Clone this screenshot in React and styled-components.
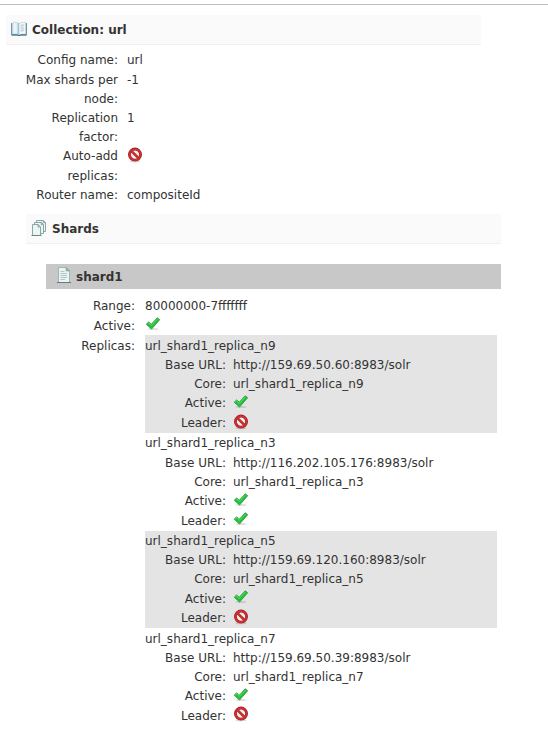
import React from "react";
import styled, { createGlobalStyle } from "styled-components";

const GlobalStyle = createGlobalStyle`
  body {
    margin: 0;
    background: #fff;
    color: #333;
    font-family: "DejaVu Sans", Verdana, sans-serif;
    font-size: 12px;
    line-height: 19.2px;
  }
`;

const Page = styled.main`
  height: 733px;
  padding-top: 4px;
`;

const TopLine = styled.hr`
  height: 1px;
  margin: 0 0 10px;
  border: none;
  background: #c0c0c0;
`;

const Collection = styled.section`
  width: 475px;
  margin-left: 6px;
`;

const Heading = styled.h2`
  display: flex;
  align-items: center;
  gap: 5px;
  box-sizing: border-box;
  height: 30px;
  margin: 0;
  padding: 2px 5px 0;
  border-bottom: 1px solid #f0f0f0;
  background: #fafafa;
  font-size: 12px;
  font-weight: bold;

  svg {
    margin-bottom: 3px;
  }
`;

const Shards = styled.section`
  margin: 9px 0 0 20px;
  width: 475px;
`;

const Shard = styled.section`
  margin: 20px 0 0 20px;
`;

const ShardHeading = styled.h3`
  display: flex;
  align-items: center;
  gap: 4px;
  box-sizing: border-box;
  height: 25px;
  margin: 0;
  padding: 2px 0 0 10px;
  background: #c8c8c8;
  font-size: 12px;
  font-weight: bold;

  svg {
    margin-bottom: 5px;
  }
`;

const List = styled.dl`
  margin: 0;
  padding-top: ${(p) => p.$top || 0}px;
`;

const Row = styled.div`
  display: grid;
  grid-template-columns: ${(p) => p.$label}px 1fr;
  column-gap: ${(p) => p.$gap}px;
  ${(p) => p.$height && `height: ${p.$height}px;`}
`;

const Label = styled.dt`
  padding-top: ${(p) => p.$top || 0}px;
  text-align: right;
`;

const Value = styled.dd`
  margin: 0;

  > svg {
    display: block;
    margin-top: ${(p) => p.$lift || 0}px;
  }
`;

const Replica = styled.div`
  box-sizing: border-box;
  width: 352px;
  height: 97.6px;
  padding-top: 1.5px;
  background: ${(p) => (p.$odd ? "#e4e4e4" : "transparent")};
`;

const ReplicaName = styled.div`
  height: 19.2px;
`;

const BookIcon = () => (
  <svg width="16" height="16" viewBox="0 0 16 16">
    <defs>
      <linearGradient id="page">
        <stop offset="0" stopColor="#f4fafc" />
        <stop offset=".6" stopColor="#e2f0f6" />
        <stop offset="1" stopColor="#8dbcd0" />
      </linearGradient>
    </defs>
    <path d="M.5 2v12h6.5l1 .8 1-.8h6.5V2" fill="#c9dce6" stroke="#5f8ca4" strokeWidth=".9" />
    <path d="M2 1c2.6 0 4.6.4 6 1.6v11.2c-1.5-.9-3.5-1.2-6-1z" fill="url(#page)" stroke="#a4c2d0" strokeWidth=".5" />
    <path d="M14.5 1.6c-3-.4-5 0-6.5 1v11.2c1.6-.8 3.5-1.1 6.5-.8z" fill="#f7fafb" stroke="#a4bbc5" strokeWidth=".5" />
    <path d="M9.5 4.3l3.8-.3M9.5 6.2l3-.2M9.5 8.1l3.8-.2M9.5 10l3.2-.2" stroke="#a1b0b6" strokeWidth=".8" />
    <path d="M.7 14h6.2l1.1.9 1.1-.9h6.2" fill="none" stroke="#356d8b" />
  </svg>
);

const DocumentsIcon = () => (
  <svg width="16" height="16" viewBox="0 0 16 16">
    <g fill="#edf5f4" stroke="#819f9d" strokeWidth=".9">
      <path d="M5.5.5h7l2 2v9h-9z" />
      <path d="M3.5 2.5h7l2 2v9h-9z" />
      <path d="M1.5 4.5h5.7l2.3 2.3v8.7h-8z" />
      <path d="M7 4.7V7h2.3M10.2 2.7v2h2M12.3.7v2h2" fill="#bdd3d1" />
    </g>
    <path d="M.5 15.5h10" stroke="#668783" />
  </svg>
);

const DocumentIcon = () => (
  <svg width="16" height="16" viewBox="0 0 16 16">
    <path d="M2.5.5h7.8l3.2 3.2v11.8h-11z" fill="#e9f5f4" stroke="#9eb6b5" />
    <path d="M10.2.7v3.2h3.1z" fill="#a9c2c0" stroke="#708f8d" strokeWidth=".7" />
    <path d="M4.5 4.5h4M4.5 6.5H11M4.5 8.5H11M4.5 10.5H11M4.5 12.5H9" stroke="#a3b8b6" strokeWidth=".8" />
    <path d="M1 15.5h14" stroke="#617b78" />
  </svg>
);

const TickIcon = () => (
  <svg width="16" height="16" viewBox="0 0 16 16">
    <ellipse cx="8" cy="13" rx="5.5" ry="1" fill="#000" opacity=".12" />
    <path d="M1.2 8.2l2.4-2.3 2.7 2.3 5.9-6.4 2.5 1.9-8.2 9.4z" fill="#24c038" stroke="#219c33" strokeWidth=".8" strokeLinejoin="round" />
    <path d="M2.4 8l1.3-1.1 2.7 2.5L12.4 3" fill="none" stroke="#66dd74" strokeWidth=".9" />
  </svg>
);

const ProhibitedIcon = () => (
  <svg width="16" height="16" viewBox="0 0 16 16">
    <ellipse cx="8" cy="14.3" rx="5.5" ry="1" fill="#000" opacity=".15" />
    <circle cx="8" cy="7.6" r="5.6" fill="#f6eeee" stroke="#a31d20" strokeWidth="2.8" />
    <path d="M4.2 3.8l7.6 7.6" stroke="#b3292c" strokeWidth="2.6" />
    <circle cx="8" cy="7.6" r="5.5" fill="none" stroke="#cc3334" strokeWidth="1.6" />
    <path d="M4.2 3.8l7.6 7.6" stroke="#c93031" strokeWidth="1.4" />
  </svg>
);

const Status = ({ on }) => (on ? <TickIcon /> : <ProhibitedIcon />);

const replicas = [
  { name: "url_shard1_replica_n9", url: "http://159.69.50.60:8983/solr", leader: false },
  { name: "url_shard1_replica_n3", url: "http://116.202.105.176:8983/solr", leader: true },
  { name: "url_shard1_replica_n5", url: "http://159.69.120.160:8983/solr", leader: false },
  { name: "url_shard1_replica_n7", url: "http://159.69.50.39:8983/solr", leader: false },
];

function Field({ label, children, width = 81, gap = 7, height, top, lift }) {
  return (
    <Row $label={width} $gap={gap} $height={height}>
      <Label $top={top}>{label}</Label>
      <Value $lift={lift}>{children}</Value>
    </Row>
  );
}

function App() {
  return (
    <Page>
      <GlobalStyle />
      <TopLine />
      <Collection>
        <Heading>
          <BookIcon />
          Collection: url
        </Heading>
        <List $top={6.4}>
          <Field label="Config name:" width={112} gap={9}>url</Field>
          <Field label={<>Max shards per<br />node:</>} width={112} gap={9}>-1</Field>
          <Field label={<>Replication<br />factor:</>} width={112} gap={9}>1</Field>
          <Field label={<>Auto-add<br />replicas:</>} width={112} gap={9}><Status /></Field>
          <Field label="Router name:" width={112} gap={9}>compositeId</Field>
        </List>
        <Shards>
          <Heading>
            <DocumentsIcon />
            Shards
          </Heading>
          <Shard>
            <ShardHeading>
              <DocumentIcon />
              shard1
            </ShardHeading>
            <List $top={8.4}>
              <Field label="Range:" width={89} gap={10} height={19.2}>80000000-7fffffff</Field>
              <Field label="Active:" width={89} gap={10} height={18.8} lift={-1}><Status on /></Field>
              <Field label="Replicas:" width={89} gap={10} top={1.5}>
                {replicas.map((replica, i) => (
                  <Replica key={replica.name} $odd={i % 2 === 0}>
                    <ReplicaName>{replica.name}</ReplicaName>
                    <List>
                      <Field label="Base URL:" height={19.2}>{replica.url}</Field>
                      <Field label="Core:" height={19.2}>{replica.name}</Field>
                      <Field label="Active:" height={19.7} lift={-0.5}><Status on /></Field>
                      <Field label="Leader:" height={19.7} lift={-0.5}><Status on={replica.leader} /></Field>
                    </List>
                  </Replica>
                ))}
              </Field>
            </List>
          </Shard>
        </Shards>
      </Collection>
    </Page>
  );
}

export default App;
